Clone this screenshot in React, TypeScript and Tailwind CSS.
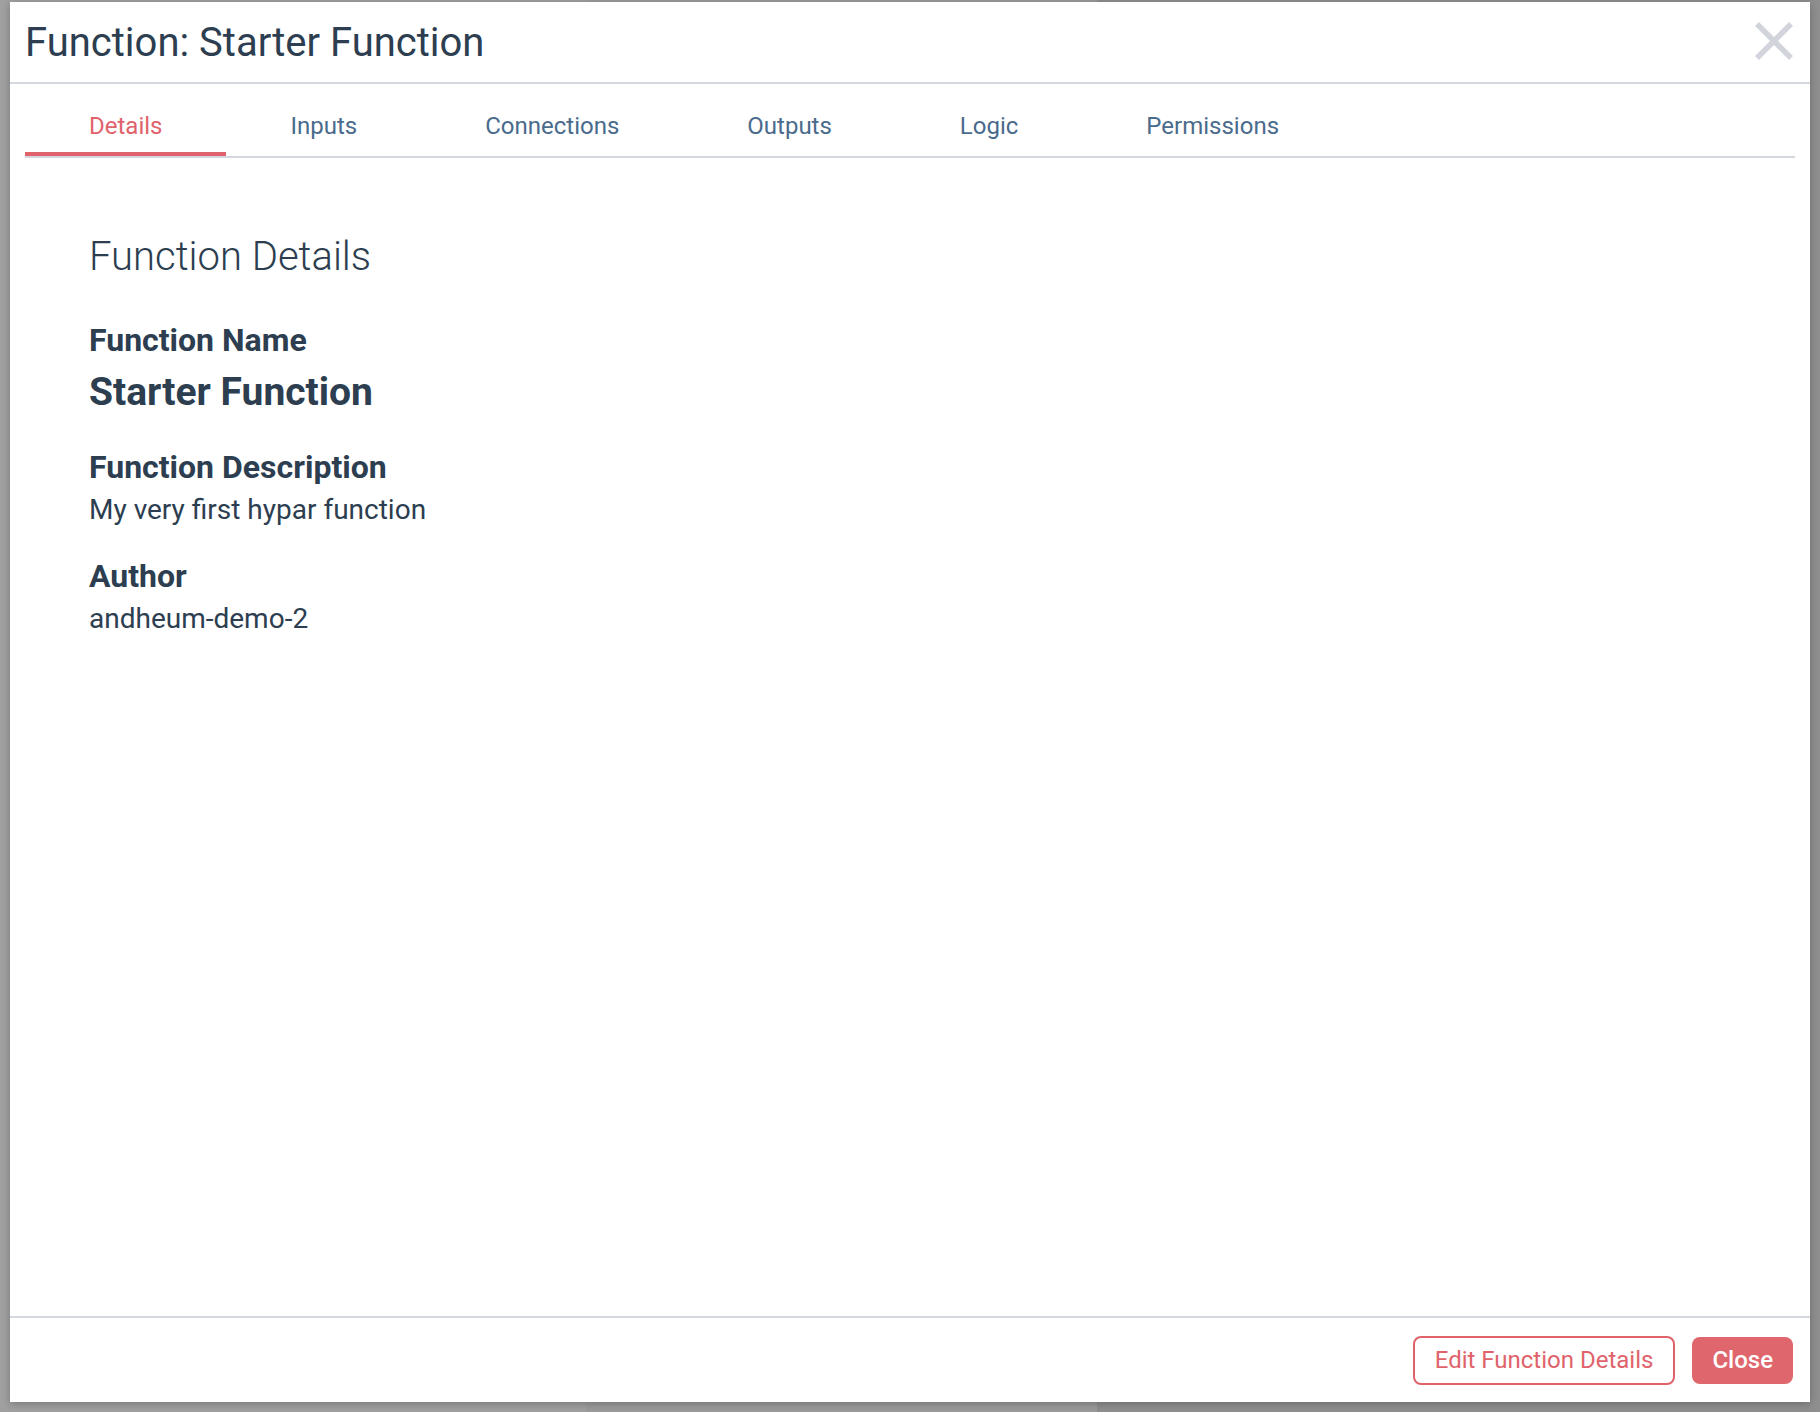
import React, { useState } from 'react'

const tabs = ['Details', 'Inputs', 'Connections', 'Outputs', 'Logic', 'Permissions']

function CloseIcon() {
  return (
    <svg width="38" height="38" viewBox="0 0 38 38" fill="none">
      <path d="M2 2 L36 36 M36 2 L2 36" stroke="#d1d4db" strokeWidth="5.5" />
    </svg>
  )
}

function Field({ label, value, big, gap }: { label: string; value: string; big?: boolean; gap: string }) {
  return (
    <div className={gap}>
      <div className="text-[32px] leading-[38px] font-bold text-[#2c3e50]">{label}</div>
      {big ? (
        <div className="mt-[10px] text-[39px] leading-[46px] font-bold text-[#2c3e50]">{value}</div>
      ) : (
        <div className="mt-[7px] text-[28px] leading-[34px] text-[#2c3e50]">{value}</div>
      )}
    </div>
  )
}

export default function App() {
  const [active, setActive] = useState('Details')

  return (
    <div className="relative h-[1412px] w-full overflow-hidden font-['Roboto',sans-serif]">
      {/* page behind the overlay */}
      <div className="flex h-full">
        <div className="w-[586px] bg-[#a0a0a0]" />
        <div className="w-[511px] bg-[#9b9b9b]" />
        <div className="flex-1 bg-[#8f8f8f]" />
      </div>

      <div className="absolute left-[10px] top-[2px] flex h-[1400px] w-[1800px] flex-col bg-white shadow-[0_2px_8px_rgba(0,0,0,0.25)]">
        <div className="flex h-[82px] items-center justify-between border-b-2 border-[#d3d7df] pl-[15px] pr-[17px]">
          <h1 className="mt-[2px] text-[40px] leading-[48px] text-[#2c3e50]">Function: Starter Function</h1>
          <button className="mt-[-2px]">
            <CloseIcon />
          </button>
        </div>

        <div className="mx-[15px] flex border-b-2 border-[#d3d7df]">
          {tabs.map((t) => (
            <button
              key={t}
              onClick={() => setActive(t)}
              className={
                t === active
                  ? 'border-b-4 border-[#e0636b] px-16 pt-[28px] pb-[12px] text-[24px] leading-[28px] text-[#e0636b]'
                  : 'border-b-4 border-transparent px-16 pt-[28px] pb-[12px] text-[24px] leading-[28px] text-[#4a6b8c]'
              }
            >
              {t}
            </button>
          ))}
        </div>

        <div className="flex-1 px-[79px]">
          <h2 className="mt-[76px] text-[40px] leading-[46px] font-light text-[#2c3e50]">Function Details</h2>
          <Field gap="mt-[41px]" label="Function Name" value="Starter Function" big />
          <Field gap="mt-[33px]" label="Function Description" value="My very first hypar function" />
          <Field gap="mt-[30px]" label="Author" value="andheum-demo-2" />
        </div>

        <div className="flex h-[86px] items-center justify-end gap-[17px] border-t-2 border-[#d3d7df] pr-[17px]">
          <button className="h-[49px] rounded-[8px] border-2 border-[#e0636b] px-[20px] text-[24px] text-[#e0636b]">
            Edit Function Details
          </button>
          <button className="h-[47px] rounded-[8px] bg-[#e0666d] px-[20px] text-[24px] font-medium text-white">
            Close
          </button>
        </div>
      </div>
    </div>
  )
}
